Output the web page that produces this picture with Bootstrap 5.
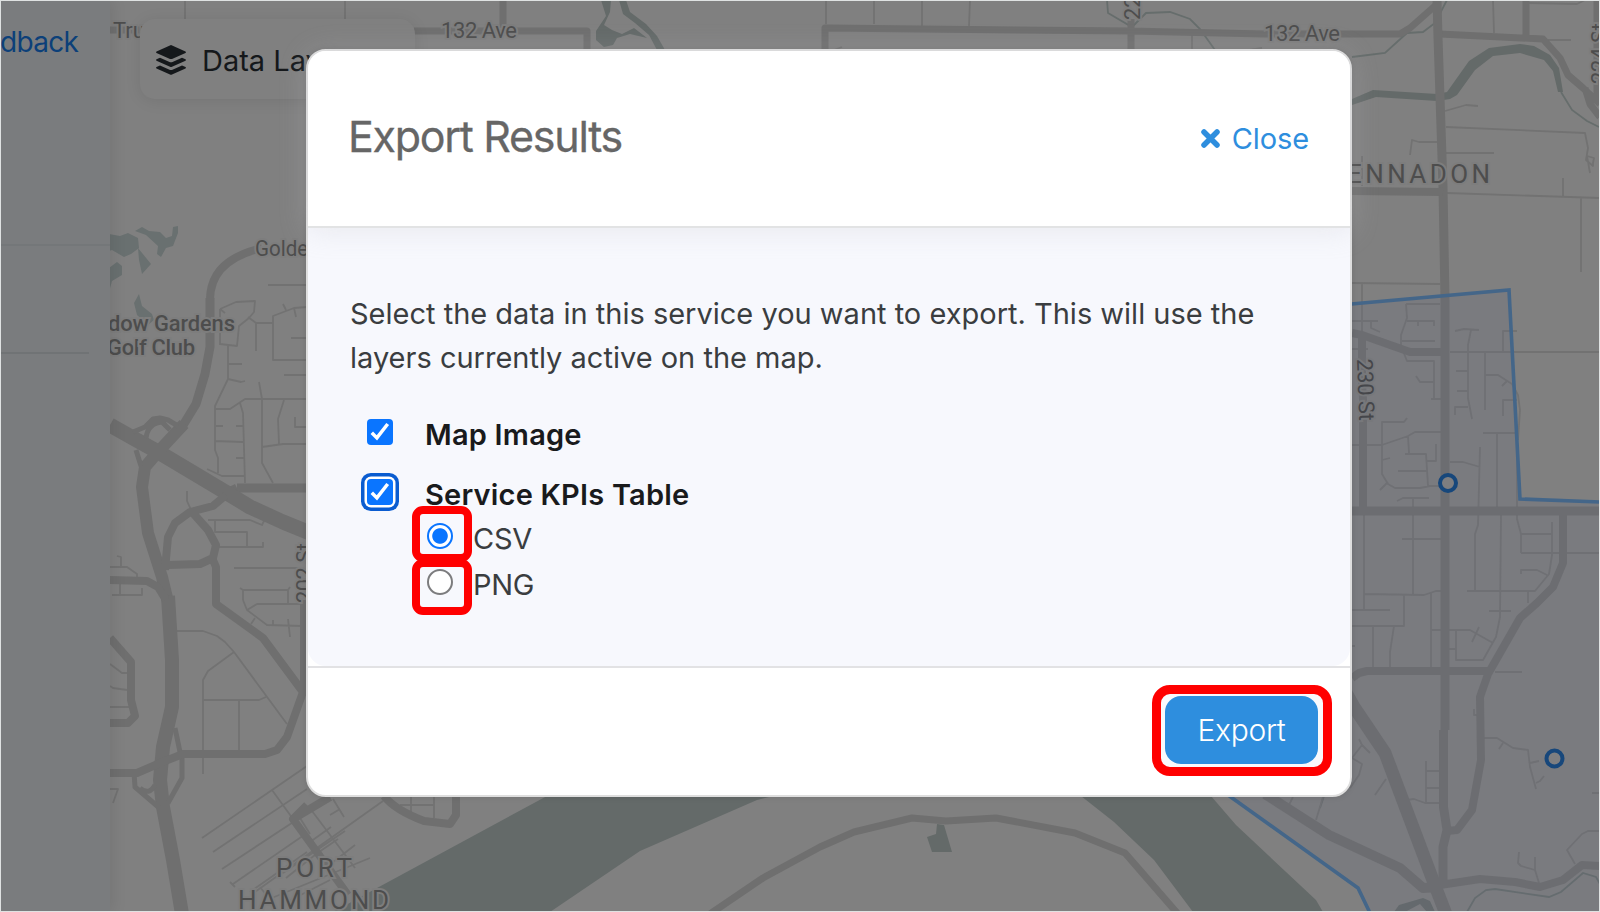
<!DOCTYPE html>
<html lang="en">
<head>
<meta charset="utf-8">
<meta name="viewport" content="width=device-width, initial-scale=1">
<title>Export Results</title>
<link href="https://cdn.jsdelivr.net/npm/bootstrap@5.3.0/dist/css/bootstrap.min.css" rel="stylesheet">
<script src="https://cdn.jsdelivr.net/npm/bootstrap@5.3.0/dist/js/bootstrap.bundle.min.js"></script>
<style>
  body { width: 1600px; height: 912px; overflow: hidden; background: #808080; font-family: Inter, "Liberation Sans", sans-serif; color: #3a3d40; }
  .app { width: 1600px; height: 912px; }
  .frame { box-shadow: inset 0 0 0 1px #dfe2e2; pointer-events: none; z-index: 9; }
  .sidepane { width: 110px; background: #7a7c7e; box-shadow: 3px 0 14px rgba(0,0,0,.09); }
  .sidepane .feedback { height: 81px; font-size: 28px; color: #0c4079; letter-spacing: -.7px; padding-top: 3px; }
  .sidepane .blk1 { height: 165px; border-bottom: 2px solid #747779; }
  .sidepane .blk2 { height: 108px; width: 89px; border-bottom: 2px solid #707375; }
  .layers { width: 275px; height: 80px; margin: 19px 0 0 30px; border-radius: 15px; background: #808080; box-shadow: 0 2px 16px rgba(0,0,0,.09); padding: 2px 0 0 15px; gap: 15px; font-size: 29px; color: #15181b; }
  .layers span { padding-top: 2px; }
  .map text { font-family: Roboto, sans-serif; font-size: 22px; fill: #4d4d4d; stroke: #7d7d7d; stroke-width: 4px; paint-order: stroke; }
  .major path { fill: none; stroke: #6f6f6f; stroke-linejoin: round; }
  .minor { fill: none; stroke: #727272; stroke-width: 1.8; stroke-linejoin: round; }
  .water { fill: #646a69; }
  .creek { fill: none; stroke: #666d6c; stroke-width: 1.8; }
  .stage { padding: 49px 0 0 306px; }
  .export-dialog { width: 1046px; height: 748px; border: 2px solid #dedede; border-radius: 20px; background: #fff; box-shadow: 0 0 6px rgba(0,0,0,.12); }
  .export-head { height: 177px; border-bottom: 2px solid #e2e3e4; border-radius: 18px 18px 0 0; background: #fff; padding: 0 41px 4px 40px; box-shadow: 0 2px 28px rgba(196,197,202,.3); }
  .export-head h1 { font-size: 43px; font-weight: 400; color: #666; letter-spacing: -1.3px; -webkit-text-stroke: .3px #666; }
  .export-head a { font-size: 29px; color: #2e8ede; gap: 11px; letter-spacing: -.1px; }
  .export-body { height: 438px; background: #f7f8fd; border-radius: 0 0 18px 18px; padding: 64px 40px 0 42px; font-size: 29px; }
  .export-body p { line-height: 44px; white-space: nowrap; }
  .opt { height: 60px; padding: 12px 0 0 17px; gap: 32px; color: #191a1c; font-weight: 600; letter-spacing: .2px; }
  .opt span { padding-top: 6px; }
  .opt .form-check-input, .fmt .form-check-input { width: 26px; height: 26px; }
  .opt .form-check-input { border-radius: 4px; border: 0; background-color: #0a75ff; }
  .opt .form-check-input:checked { background-size: 26px; background-image: url("data:image/svg+xml,%3Csvg xmlns='http://www.w3.org/2000/svg' viewBox='0 0 26 26'%3E%3Cpath d='M4.800 13.800L9.900 18.900L20.700 5' fill='none' stroke='white' stroke-width='3.500'/%3E%3C/svg%3E"); }
  .opt .form-check-input.ringed { box-shadow: 0 0 0 2.5px #fff, 0 0 0 6px #0a5cd0; }
  .fmt { height: 46px; padding-left: 77px; gap: 20px; font-size: 29px; letter-spacing: -.3px; }
  .fmt .form-check-input { margin: 0 0 6px; }
  .hl { border: 8px solid #f00; border-radius: 11px; width: 60px; height: 56px; left: 62px; top: -10px; }
  .fmt + .fmt .hl { top: -3px; }
  .fmt .form-check-input { border: 2px solid #7c7c7e; background-color: #fff; background-image: none; }
  .fmt .form-check-input:checked { border-color: #0a75ff; background: radial-gradient(circle, #0a75ff 7.3px, #fff 8.2px); }
  .export-foot { height: 129px; border-top: 2px solid #e2e2e4; padding: 17px 18px 0 0; }
  .hl-btn { border: 9px solid #f00; border-radius: 18px; width: 180px; height: 91px; background: #f9f9fc; padding: 2px 5px 3px 4px; }
  .hl-btn .btn { background: #2e8ede; color: #fff; border: 0; border-radius: 16px; font-size: 30px; font-weight: 300; letter-spacing: -.3px; width: 153px; height: 68px; padding: 0; display: block; }
</style>
</head>
<body>
<div class="app position-relative">
  <svg class="map position-absolute top-0 start-0" width="1600" height="912" viewBox="0 0 1600 912">
    <rect width="1600" height="912" fill="#808080"/>
    <!-- water -->
    <g class="water">
      <path d="M547 796L377 888L333 912H550L640 851L757 800L773 796Z"/>
      <path d="M1081 796L1114 822L1154 860L1193 912H1323L1316 900L1236 825L1211 796Z"/>
      <path d="M937 824L944 825L952 852H932L927 837L936 834Z"/>
      <path fill="#697070" d="M109 234L120 236L128 233L138 238L139 248L131 254L124 257L112 250L109 251ZM135 231L142 227L149 231L160 232L166 238L172 236L173 227L178 226L178 233L173 246L166 248L161 257L157 254L158 246L146 235ZM138 248L151 264L142 274L139 260ZM109 268L117 262L122 266L122 275L112 281L109 292ZM134 303L139 294L142 306L152 314L154 320L148 325L137 315Z"/>
      <path d="M601 0H611L610 12L604 25L612 30L622 34L634 28L647 38L630 34L617 38L613 45L604 47L596 40L596 31L606 16ZM619 0H626L630 12L646 24L657 36L665 50H657L649 35L635 23L623 14Z"/>
      <path d="M1352 99L1373 90L1437 94L1447 92L1469 61L1489 48L1520 44L1534 46L1550 55L1559 68L1563 92L1558 92L1553 71L1544 60L1520 53L1493 56L1475 70L1457 95L1450 99L1437 101L1376 97L1352 105Z"/>
      <path d="M1394 912L1399 905L1423 898L1430 901L1435 912H1427L1420 904L1405 912Z"/>
    </g>
    <g class="creek">
      <path d="M1352 57L1385 53L1407 33L1423 32L1435 23L1447 0M1561 92L1572 110L1587 121L1599 127M1107 0L1108 13L1132 27L1146 13L1170 12L1190 19L1200 29L1215 50"/>
      <path d="M1467 912L1475 898L1486 890L1495 889L1549 897L1561 892L1583 873L1596 877L1600 884M1320 808L1324 796"/>
    </g>
    <!-- residential streets -->
    <path class="minor" d="M185 0V19M345 0V19M268 285H307M220 345V309M220 309L236 302L255 301L254 312L249 318L239 326L237 346L220 344M220 309L225 313M228 346V379L215 406V450L218 458V473M228 364H242M228 379L241 382L245 381M248 317L256 323H273V316L294 308L307 307M256 323V351M273 323V360H307M291 338H307M284 375H307M283 304L286 310M294 308L296 317M259 382L262 399V463L273 483M215 409H230L245 399H307M240 403L243 413L245 483M216 426H223M236 426H243M215 441L243 442M236 458H245M207 469L222 476H245M262 447L283 444H307M284 400L278 419L279 444M295 417V427H307M187 491V501L192 512M208 520H250L262 525L264 521M215 520V532H247V547M219 547H263V542M234 568H300M243 600V590L240 588M243 590H288V600M288 590L290 587M110 567H127L137 574V578M117 556L121 557V566M120 581V595M112 595H142V588"/>
    <path class="minor" d="M177 631H203L217 636L225 642L234 652L287 724M234 652L208 671L203 680V774M203 700H259L266 697M239 700V752M110 664L122 673H131M110 686L113 688L127 690M110 707H129M243 600L247 610L267 625L302 626M247 610L257 604H303M255 618L251 624M273 620V626M288 619L290 637M288 600V604M110 789H118L113 803"/>
    <path class="minor" d="M202 838L307 766M213 852L307 789M222 869L307 813M233 884L307 833M230 882L235 887M272 790L293 819M252 894L383 801M283 873L345 831M312 811L355 868M333 799L344 817M330 815L340 809M250 892L307 852M262 902L370 858M286 878L320 851M300 818L310 834M310 842L331 827M319 852L338 839M328 866L355 845M260 887L267 896M285 903L330 880M411 797V814M434 797V818M400 805H434"/>
    <path class="minor" d="M826 0V24M874 0V24M922 0V26M970 0L969 26M1192 34V50M1493 0L1494 33M1528 3L1577 4L1585 0M1548 40H1571M1445 111L1466 105L1478 106M1446 127L1585 133L1588 148L1586 160L1593 166V163L1594 158L1587 156L1590 173M1410 155L1412 140L1419 142H1438M1446 153H1494M1447 193L1600 198M1563 178V197M1581 198V272M1362 156V186M1352 283L1440 284M1362 283V333M834 50L842 47M1250 50L1262 48"/>
    <path class="minor" d="M1406 304H1440M1406 304L1407 318L1401 335V346L1407 361H1434V399M1407 321H1434V326M1418 322V326M1402 341H1435M1352 321H1378M1371 322V328L1380 332M1352 349H1368M1416 376L1420 382H1434M1431 399H1445M1455 331L1464 329L1479 330M1471 330L1468 345V398L1472 419M1456 371H1468M1457 391H1468M1455 415V407H1468M1450 352H1600M1485 352V410M1485 375H1498L1512 384L1518 395L1520 410L1518 440M1503 352V331H1517M1503 416V400H1517M1502 386L1507 381M1483 433H1517M1497 433V508M1517 440V519L1521 534V553M1521 534H1552M1521 553H1600M1552 522V555L1549 574L1535 591H1467M1521 574V570H1537L1547 575"/>
    <path class="minor" d="M1352 445H1382L1408 436L1415 432H1445M1382 445V422H1404L1407 418M1382 445V474L1388 484L1395 488H1420L1430 486H1440M1380 490L1388 482M1382 460L1390 458M1408 436L1409 453M1405 454H1426L1428 486M1426 461H1436V444M1398 471H1427M1450 462H1463L1480 467M1480 447L1478 525L1475 534V591M1397 501L1403 498H1429M1413 499V595M1364 515V610M1402 539H1443M1364 594L1424 595L1436 591H1443M1501 515L1500 617L1496 637L1483 660H1456V631M1404 595V626H1352M1373 626V668M1394 626L1390 652V668M1431 593V667M1431 630H1470L1493 643M1479 627L1472 642M1489 611H1511M1352 610H1390M1446 649H1456M1495 672H1522M1528 591V603M1352 646H1355"/>
    <path class="minor" d="M1474 709V715H1480M1480 738H1497L1513 748L1528 750L1530 767L1536 789M1503 743L1499 749M1530 763L1539 761M1536 783L1540 781L1544 776M1443 771H1426V803M1426 788H1443M1406 800L1414 799L1425 803H1441M1426 761V773M1386 779L1375 795M1352 758L1362 764L1359 775L1350 788M1352 758L1362 745L1359 739M1362 745L1370 753M1323 797L1316 820M1293 797L1288 807M1519 852L1518 863L1521 866L1535 870L1539 883M1535 857V870M1575 864L1567 850L1582 834L1588 831H1600M1592 793H1600"/>
    <!-- arterial roads -->
    <g class="major">
      <path stroke-width="7" d="M110 30H144M414 31H587V52M503 0V31M825 52V28L1130 31L1264 34H1400L1410 28L1436 5M1131 19V52M1440 34L1543 39L1560 58L1568 75L1583 88L1600 104M1526 0V36M1585 88L1590 104L1600 117M1597 0V100"/>
      <path stroke-width="8" d="M262 248Q210 260 210 300"/>
      <path stroke-width="9" d="M210 298V347L205 374L196 404L182 427L157 453M237 488H307M225 494L237 488"/>
      <path stroke-width="15" d="M110 425L133 438L160 453L227 493L250 507L283 522L310 533"/>
      <path stroke-width="12" d="M184 424L157 453L145 467L142 487L148 533L162 577L168 602"/>
      <path stroke-width="14" d="M168 596L172 660V707L163 747L160 780L163 807L173 860L182 914"/>
      <path stroke-width="5" d="M133 432L145 427L153 419L160 418L168 420L178 426M146 438Q148 423 162 422L170 430M136 450L141 466M134 772L135 787L163 811M140 788Q149 796 155 785M182 757V778L168 803M175 728L180 752"/>
      <path stroke-width="8" d="M226 495L213 506L190 512L175 523L168 537L165 570M192 512L208 530L216 545L213 558L200 564L168 565M213 560L216 567V604L263 638L303 692L287 737L277 750L265 754H183L160 763L137 773H110M110 580L147 581L158 587L166 600M110 638L131 662V700L135 716L128 723H110M304 600V692M307 805L293 819L348 895M293 819L330 797M384 796Q395 810 424 821L450 824L456 815V796"/>
      <path stroke-width="7" d="M710 914L763 878L820 847L854 832L912 818L946 821L996 818L1075 833L1125 853L1178 914"/>
      <path stroke-width="9" d="M1437 0L1438 37L1443 187L1445 300V730M1443.500 730V807L1447 830L1443 847V883M1352 511H1600"/>
      <path stroke-width="8" d="M1352 191L1443 192M1352 333L1362 335L1410 352H1445M1362 335V380L1363 400V510M1352 678L1359 673L1367 671H1490M1563 512V563L1553 587L1537 603L1520 618L1488 674L1480 697L1481 760L1472 810L1457 830L1447 831M1440 885L1480 879L1515 882L1540 887L1563 880L1582 865L1600 866"/>
      <path stroke-width="10" d="M1265 794L1329 835L1400 868L1423 888L1440 887"/>
      <path stroke-width="13" d="M1340 682L1354 707L1385 753L1434 883L1446 914"/>
    </g>
    <!-- service area -->
    <path d="M1340 305L1510 290L1520 499L1600 502V912H1370L1358 888L1230 797H1340Z" fill="#64697d" fill-opacity=".2" stroke="none"/>
    <path d="M1340 305L1509 290L1520 499L1601 502M1370 913L1358 888L1228 795" fill="none" stroke="#446689" stroke-width="3.600"/>
    <g fill="#7e7e80" stroke="#17477b" stroke-width="4"><circle cx="1448" cy="483" r="8"/><circle cx="1554.500" cy="758.500" r="8"/></g>
    <!-- place labels -->
    <text x="113" y="38">Tru</text>
    <text x="255" y="256" textLength="110" lengthAdjust="spacingAndGlyphs">Golden Ears</text>
    <text x="108" y="331" font-weight="500" textLength="127">dow Gardens</text>
    <text x="107" y="355" font-weight="500" textLength="88">Golf Club</text>
    <text x="441" y="38" textLength="76">132 Ave</text>
    <text x="1264" y="41" textLength="76">132 Ave</text>
    <text transform="translate(1140 20) rotate(-90)">22</text>
    <text transform="translate(1607 84) rotate(-90)" textLength="61">224 St</text>
    <text transform="translate(1357 359) rotate(88)" textLength="62" style="stroke:#77787b;fill:#45464a">230 St</text>
    <text transform="translate(312 603) rotate(-90)" textLength="60">202 St</text>
    <g style="stroke-width:3px"><text x="1347" y="183" style="font-size:26px" textLength="143">ENNADON</text>
    <text x="276" y="877" style="font-size:26px" textLength="76">PORT</text>
    <text x="238" y="909" style="font-size:26px" textLength="151">HAMMOND</text></g>
  </svg>

  <div class="position-absolute top-0 start-0 h-100 d-flex align-items-start">
    <aside class="sidepane h-100">
      <div class="feedback d-flex align-items-center">dback</div>
      <div class="blk1"></div>
      <div class="blk2"></div>
    </aside>
    <div class="layers d-flex align-items-center">
      <svg width="32" height="32" viewBox="0 0 32 32" fill="#15181b"><path d="M16 1L30.500 7.500Q31.500 8.200 30.500 8.900L17 14.900Q16 15.300 15 14.900L1.500 8.900Q.5 8.200 1.500 7.500Z"/><path d="M1.500 15.300L5 13.700L14.500 17.900Q16 18.500 17.500 17.900L27 13.700L30.500 15.300Q31.500 16 30.500 16.700L17 22.700Q16 23.100 15 22.700L1.500 16.700Q.5 16 1.500 15.300Z"/><path d="M1.500 23.100L5 21.500L14.500 25.700Q16 26.300 17.500 25.700L27 21.500L30.500 23.100Q31.500 23.800 30.500 24.500L17 30.500Q16 30.900 15 30.500L1.500 24.500Q.5 23.800 1.500 23.100Z"/></svg>
      <span>Data Layers</span>
    </div>
  </div>

  <div class="stage position-absolute top-0 start-0">
    <div class="export-dialog" role="dialog" aria-label="Export Results">
      <div class="export-head d-flex align-items-center justify-content-between position-relative">
        <h1 class="m-0">Export Results</h1>
        <a href="#" class="d-flex align-items-center text-decoration-none pt-1">
          <svg width="21" height="21" viewBox="0 0 21 21" stroke="#2e8ede" stroke-width="5.500" stroke-linecap="round"><path d="M4 4L17 17M17 4L4 17"/></svg>
          <span>Close</span>
        </a>
      </div>
      <div class="export-body">
        <p class="mb-0">Select the data in this service you want to export. This will use the<br>layers currently active on the map.</p>
        <div class="pt-3">
          <label class="opt d-flex align-items-center"><input class="form-check-input m-0" type="checkbox" checked><span>Map Image</span></label>
          <label class="opt d-flex align-items-center"><input class="form-check-input ringed m-0" type="checkbox" checked><span>Service KPIs Table</span></label>
        </div>
        <label class="fmt d-flex align-items-center position-relative"><i class="hl position-absolute"></i><input class="form-check-input" type="radio" name="fmt" checked><span>CSV</span></label>
        <label class="fmt d-flex align-items-center position-relative"><i class="hl position-absolute"></i><input class="form-check-input" type="radio" name="fmt"><span>PNG</span></label>
      </div>
      <div class="export-foot d-flex justify-content-end">
        <div class="hl-btn"><button class="btn" type="button">Export</button></div>
      </div>
    </div>
  </div>
  <div class="frame position-absolute top-0 start-0 w-100 h-100"></div>
</div>
</body>
</html>
